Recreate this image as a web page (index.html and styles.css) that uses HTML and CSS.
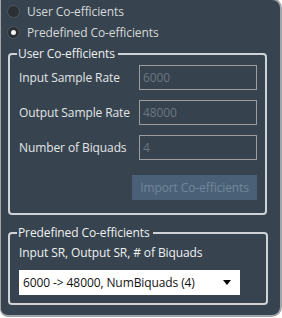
FILE: index.html
```html
<!DOCTYPE html>
<html>
<head>
<meta charset="utf-8">
<link rel="stylesheet" href="styles.css">
</head>
<body>
<div class="panel">
  <label class="radio-row"><span class="radio"></span><span class="radio-text">User Co-efficients</span></label>
  <label class="radio-row"><span class="radio checked"></span><span class="radio-text">Predefined Co-efficients</span></label>

  <fieldset class="group group-user">
    <legend class="legend">User Co-efficients</legend>
    <div class="field-row first">
      <span class="field-label">Input Sample Rate</span>
      <span class="field-input">6000</span>
    </div>
    <div class="field-row">
      <span class="field-label">Output Sample Rate</span>
      <span class="field-input">48000</span>
    </div>
    <div class="field-row">
      <span class="field-label">Number of Biquads</span>
      <span class="field-input">4</span>
    </div>
    <div class="button-row">
      <span class="import-btn">Import Co-efficients</span>
    </div>
  </fieldset>

  <fieldset class="group group-pre">
    <legend class="legend">Predefined Co-efficients</legend>
    <div class="pre-label">Input SR, Output SR, # of Biquads</div>
    <div class="select">
      <span class="select-text">6000 -&gt; 48000, NumBiquads (4)</span>
      <svg class="select-arrow" width="8" height="5" viewBox="0 0 8 5"><path d="M0 0H8L4 5Z" fill="#000"/></svg>
    </div>
  </fieldset>
</div>
</body>
</html>
```
FILE: styles.css
```css
html, body {
  margin: 0;
  padding: 0;
  background: #ffffff;
}
body {
  font-family: "Open Sans", "Noto Sans", sans-serif;
  font-size: 12px;
  letter-spacing: -0.1px;
}
.panel {
  box-sizing: border-box;
  width: 282px;
  height: 319px;
  margin-top: -2px;
  background: #37444f;
  border: 2px solid #a3a6a9;
  border-left-width: 1px;
  border-radius: 0 10px 10px 8px;
  padding: 1px 0 0 0;
  display: flex;
  flex-direction: column;
}
.radio-row {
  display: flex;
  align-items: center;
  height: 21px;
  padding-left: 6px;
}
.radio {
  box-sizing: border-box;
  width: 13px;
  height: 13px;
  border-radius: 50%;
  background: #2b3035;
  border: 1px solid #4e575f;
  display: flex;
  align-items: center;
  justify-content: center;
}
.radio.checked::after {
  content: "";
  width: 5px;
  height: 5px;
  border-radius: 50%;
  background: #f2f2f2;
}
.radio-text {
  margin-left: 7px;
  color: #d6d8da;
}
.group {
  margin: 2px 13px 0 7px;
  padding: 0 8px 0 9px;
  border: 2px solid #cfd3d7;
  border-radius: 4px;
  min-width: 0;
}
.legend {
  color: #eef0f2;
  padding: 0 3px 0 1px;
  margin-left: -2px;
  line-height: 17px;
}
.field-row {
  display: flex;
  align-items: center;
  justify-content: space-between;
  height: 25px;
  margin-top: 10px;
}
.field-row.first {
  margin-top: 3px;
}
.field-label {
  color: #e3e5e7;
}
.field-input {
  box-sizing: border-box;
  flex: none;
  width: 118px;
  height: 25px;
  border: 1px solid #9a9ea2;
  background: #36434e;
  color: #6b7782;
  padding-left: 3px;
  display: flex;
  align-items: center;
}
.button-row {
  display: flex;
  justify-content: flex-end;
  margin-top: 15px;
  margin-bottom: 13px;
}
.import-btn {
  flex: none;
  box-sizing: border-box;
  width: 125px;
  height: 25px;
  background: #4a6077;
  color: #71869a;
  display: flex;
  align-items: center;
  justify-content: center;
}
.group-pre {
  margin-top: 9px;
  margin-right: 12px;
  padding-bottom: 8px;
}
.pre-label {
  color: #eef0f2;
  margin-top: 3px;
  line-height: 17px;
}
.select {
  box-sizing: border-box;
  width: 221px;
  height: 25px;
  margin-top: 9px;
  background: #ffffff;
  display: flex;
  align-items: center;
  justify-content: space-between;
  padding: 0 9px 0 4px;
}
.select-text {
  color: #111111;
}
```
